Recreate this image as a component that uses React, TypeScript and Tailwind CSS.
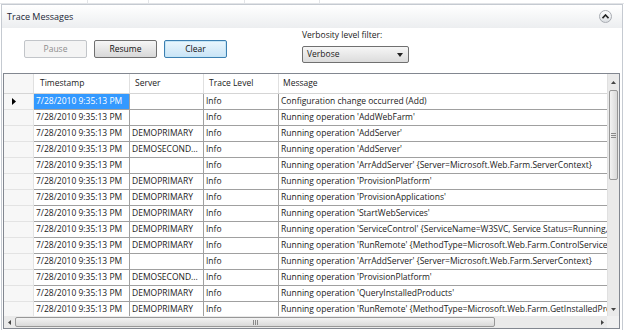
import React from 'react';

type Row = { server: string; message: string };

const rows: Row[] = [
  { server: '', message: 'Configuration change occurred (Add)' },
  { server: '', message: "Running operation 'AddWebFarm'" },
  { server: 'DEMOPRIMARY', message: "Running operation 'AddServer'" },
  { server: 'DEMOSECOND...', message: "Running operation 'AddServer'" },
  { server: '', message: "Running operation 'ArrAddServer' {Server=Microsoft.Web.Farm.ServerContext}" },
  { server: 'DEMOPRIMARY', message: "Running operation 'ProvisionPlatform'" },
  { server: 'DEMOPRIMARY', message: "Running operation 'ProvisionApplications'" },
  { server: 'DEMOPRIMARY', message: "Running operation 'StartWebServices'" },
  { server: 'DEMOPRIMARY', message: "Running operation 'ServiceControl' {ServiceName=W3SVC, Service Status=Running, Timeout=00:01:00}" },
  { server: 'DEMOPRIMARY', message: "Running operation 'RunRemote' {MethodType=Microsoft.Web.Farm.ControlServiceMethod}" },
  { server: '', message: "Running operation 'ArrAddServer' {Server=Microsoft.Web.Farm.ServerContext}" },
  { server: 'DEMOSECOND...', message: "Running operation 'ProvisionPlatform'" },
  { server: 'DEMOPRIMARY', message: "Running operation 'QueryInstalledProducts'" },
  { server: 'DEMOPRIMARY', message: "Running operation 'RunRemote' {MethodType=Microsoft.Web.Farm.GetInstalledProductsMethod}" },
];

const TraceMessages: React.FC = () => {
  return (
    <div className="w-[624px] h-[330px] overflow-hidden bg-white font-['Open_Sans',sans-serif] text-[8.5px] text-[#1b1b1b]">
      {/* strip from the panel above */}
      <div className="flex h-[4px] border-b border-[#e2e4e7]">
        <div className="w-[88px] border-r border-[#e3e5e8]" />
        <div className="w-[61px] border-r border-[#e3e5e8]" />
        <div className="w-[96px] border-r border-[#e3e5e8]" />
        <div className="w-[75px] border-r border-[#e3e5e8]" />
      </div>

      <div className="mx-[1px] h-[340px] border border-[#c5cad1] bg-white flex flex-col">
        {/* Header */}
        <div className="h-[23px] flex items-center justify-between pl-[5px] pr-[10px] bg-gradient-to-b from-white to-[#eceef0]">
          <span className="text-[9px] font-medium text-[#1a2535]">Trace Messages</span>
          <div className="w-[13px] h-[13px] rounded-full border border-[#a8acb2] bg-gradient-to-b from-white to-[#dcdfe3] flex items-center justify-center">
            <svg width="7" height="5" viewBox="0 0 7 5">
              <path d="M0.5 4.2 L3.5 1 L6.5 4.2" fill="none" stroke="#222" strokeWidth="1.6" />
            </svg>
          </div>
        </div>

        {/* Controls */}
        <div className="h-[45px] flex">
          <div className="flex gap-[7px] pl-[22px] pt-[12px]">
            <button className="w-[63px] h-[18px] border border-[#c2c5c9] rounded-[2px] bg-[#f4f4f4] text-[#8d8d8d]">
              Pause
            </button>
            <button className="w-[63px] h-[18px] border border-[#707070] rounded-[2px] bg-gradient-to-b from-[#f6f6f6] to-[#d8d8d8] text-[#111]">
              Resume
            </button>
            <button className="w-[63px] h-[18px] border border-[#3c7fb1] rounded-[2px] bg-gradient-to-b from-[#eaf6fd] to-[#c9e4f6] text-[#111] shadow-[inset_0_0_0_1px_#c4e5f6]">
              Clear
            </button>
          </div>
          <div className="ml-[75px] pt-[1px] flex flex-col">
            <span className="leading-[12px]">Verbosity level filter:</span>
            <div className="mt-[5px] w-[107px] h-[17px] border border-[#707070] rounded-[2px] bg-gradient-to-b from-[#f6f6f6] to-[#dcdcdc] flex items-center justify-between pl-[4px] pr-[5px]">
              <span>Verbose</span>
              <svg width="6" height="4" viewBox="0 0 6 4">
                <path d="M0 0 H6 L3 4 Z" fill="#222" />
              </svg>
            </div>
          </div>
        </div>

        {/* Grid */}
        <div className="ml-[1px] mr-[2px] h-[256px] border border-[#828790] flex flex-col">
          <div className="flex flex-1 min-h-0">
            <div className="flex-1 min-w-0 flex flex-col overflow-hidden">
              {/* Column headers */}
              <div className="flex h-[20px] shrink-0 border-b border-[#d5d5d5] bg-white">
                <div className="w-[30px] border-r border-[#e0e0e0] bg-[#f7f7f7]" />
                <div className="w-[96px] shrink-0 border-r border-[#e0e0e0] pl-[6px] flex items-center">Timestamp</div>
                <div className="w-[74px] shrink-0 border-r border-[#e0e0e0] pl-[5px] flex items-center">Server</div>
                <div className="w-[75px] shrink-0 border-r border-[#e0e0e0] pl-[5px] flex items-center">Trace Level</div>
                <div className="flex-1 pl-[4px] flex items-center">Message</div>
              </div>
              {/* Rows */}
              {rows.map((r, i) => (
                <div key={i} className="flex h-[16px] shrink-0 whitespace-nowrap">
                  <div className="w-[30px] shrink-0 border-r border-b border-[#e3e3e3] bg-[#f7f7f7] flex items-center pl-[8px]">
                    {i === 0 && (
                      <svg width="4" height="7" viewBox="0 0 4 7">
                        <path d="M0 0 L4 3.5 L0 7 Z" fill="#000" />
                      </svg>
                    )}
                  </div>
                  <div
                    className={
                      i === 0
                        ? 'w-[96px] shrink-0 border-r border-b border-[#a0a0a0] bg-[#3399ff] text-white pl-[2px] flex items-center'
                        : 'w-[96px] shrink-0 border-r border-b border-[#a0a0a0] pl-[2px] flex items-center'
                    }
                  >
                    7/28/2010 9:35:13 PM
                  </div>
                  <div className="w-[74px] shrink-0 border-r border-b border-[#a0a0a0] pl-[2px] flex items-center overflow-hidden">
                    {r.server}
                  </div>
                  <div className="w-[75px] shrink-0 border-r border-b border-[#a0a0a0] pl-[2px] flex items-center">Info</div>
                  <div className="flex-1 min-w-0 border-b border-[#a0a0a0] pl-[2px] flex items-center overflow-hidden">
                    {r.message}
                  </div>
                </div>
              ))}
            </div>

            {/* Vertical scrollbar */}
            <div className="w-[12px] shrink-0 bg-[#eaeaea] flex flex-col border-l border-[#e0e0e0]">
              <div className="h-[16px] flex items-center justify-center">
                <svg width="5" height="3" viewBox="0 0 5 3">
                  <path d="M0 3 L2.5 0 L5 3 Z" fill="#444" />
                </svg>
              </div>
              <div className="mx-[1px] h-[90px] rounded-[2px] border border-[#979797] bg-gradient-to-r from-[#f3f3f3] to-[#d9d9d9] flex flex-col items-center justify-center gap-[1px]">
                <div className="w-[5px] h-px bg-[#8a8a8a]" />
                <div className="w-[5px] h-px bg-[#8a8a8a]" />
                <div className="w-[5px] h-px bg-[#8a8a8a]" />
              </div>
              <div className="flex-1" />
              <div className="h-[14px] flex items-center justify-center">
                <svg width="5" height="3" viewBox="0 0 5 3">
                  <path d="M0 0 L2.5 3 L5 0 Z" fill="#444" />
                </svg>
              </div>
            </div>
          </div>

          {/* Horizontal scrollbar */}
          <div className="h-[12px] shrink-0 flex bg-[#eaeaea]">
            <div className="w-[11px] flex items-center justify-center">
              <svg width="3" height="5" viewBox="0 0 3 5">
                <path d="M3 0 L0 2.5 L3 5 Z" fill="#444" />
              </svg>
            </div>
            <div className="w-[480px] my-[1px] rounded-[2px] border border-[#979797] bg-gradient-to-b from-[#f3f3f3] to-[#d9d9d9] flex items-center justify-center gap-[1px]">
              <div className="w-px h-[5px] bg-[#8a8a8a]" />
              <div className="w-px h-[5px] bg-[#8a8a8a]" />
              <div className="w-px h-[5px] bg-[#8a8a8a]" />
            </div>
            <div className="flex-1" />
            <div className="w-[10px] flex items-center justify-center">
              <svg width="3" height="5" viewBox="0 0 3 5">
                <path d="M0 0 L3 2.5 L0 5 Z" fill="#444" />
              </svg>
            </div>
            <div className="w-[12px] bg-[#f0f0f0]" />
          </div>
        </div>
      </div>
    </div>
  );
};

export default TraceMessages;
